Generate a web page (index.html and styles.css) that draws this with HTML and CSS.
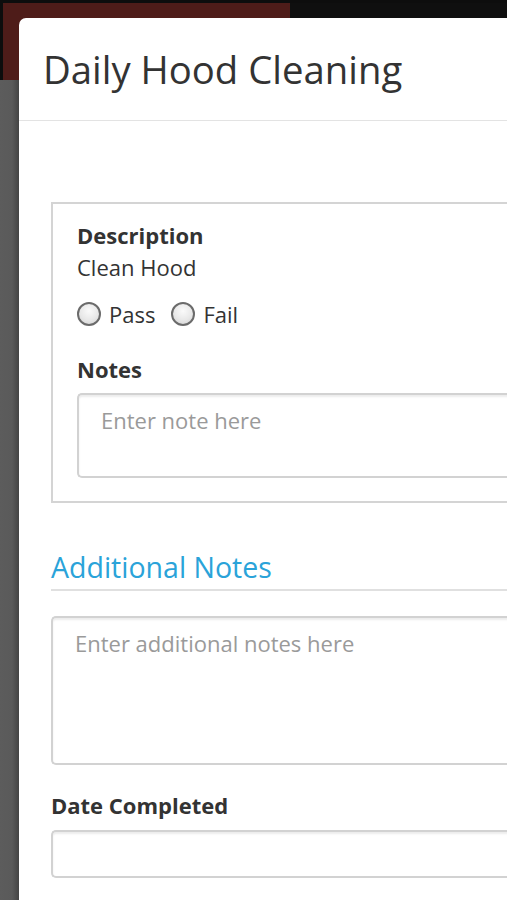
FILE: index.html
```html
<!DOCTYPE html>
<html>
<head>
<meta charset="utf-8">
<link rel="stylesheet" href="styles.css">
</head>
<body>
<div class="backdrop">
  <div class="bg-top">
    <div class="bg-red"></div>
    <div class="bg-black"></div>
  </div>
  <div class="bg-gray"></div>
</div>
<div class="modal">
  <div class="modal-header">
    <h1 class="title">Daily Hood Cleaning</h1>
  </div>
  <div class="modal-body">
    <div class="card">
      <div class="label">Description</div>
      <div class="value">Clean Hood</div>
      <div class="radios">
        <label class="radio"><span class="dot"></span>Pass</label>
        <label class="radio"><span class="dot"></span>Fail</label>
      </div>
      <div class="label notes-label">Notes</div>
      <div class="textarea small"><span class="ph">Enter note here</span></div>
    </div>
    <h2 class="section">Additional Notes</h2>
    <div class="textarea big"><span class="ph">Enter additional notes here</span></div>
    <div class="label date-label">Date Completed</div>
    <div class="input"></div>
  </div>
</div>
</body>
</html>
```
FILE: styles.css
```css
html, body {
  margin: 0;
  padding: 0;
  width: 507px;
  height: 900px;
  overflow: hidden;
  background: #0d0d0d;
  font-family: "Open Sans", "Noto Sans", sans-serif;
  color: #333;
}
.backdrop {
  position: absolute;
  left: 0; top: 0;
  width: 507px; height: 900px;
  display: flex;
  flex-direction: column;
}
.bg-top {
  display: flex;
  height: 80px;
  padding: 3px 0 0 3px;
  box-sizing: border-box;
}
.bg-red {
  width: 287px;
  background: #4e1c19;
}
.bg-black {
  flex: 1;
  background: #0f0f0f;
}
.bg-gray {
  flex: 1;
  background: linear-gradient(to right, #5c5c5c 0, #5a5a5a 12px, #444 19px);
}
.modal {
  position: absolute;
  left: 19px;
  top: 18px;
  width: 560px;
  height: 900px;
  background: #fff;
  border-radius: 7px 0 0 0;
}
.modal-header {
  height: 103px;
  border-bottom: 1px solid #e3e3e3;
  padding: 0 0 0 24px;
  box-sizing: border-box;
}
.title {
  margin: 0;
  padding-top: 25px;
  font-size: 38.3px;
  font-weight: 400;
  line-height: 52px;
  color: #333;
}
.modal-body {
  padding: 81px 0 0 32px;
}
.card {
  border: 2px solid #d4d4d4;
  border-right: none;
  padding: 16px 0 23px 24px;
}
.label {
  font-weight: 700;
  font-size: 22px;
  line-height: 30px;
  color: #333;
}
.value {
  font-size: 22px;
  line-height: 30px;
  margin-top: 2px;
}
.radios {
  display: flex;
  gap: 16px;
  margin-top: 19px;
}
.radio {
  display: flex;
  align-items: center;
  gap: 8px;
  font-size: 22px;
  line-height: 26px;
}
.dot {
  width: 20px;
  height: 20px;
  border: 2px solid #6b6b6b;
  border-radius: 50%;
  background: radial-gradient(circle at 50% 35%, #fafafa 0, #e8e8e8 55%, #cfcfcf 100%);
  display: inline-block;
}
.notes-label {
  margin-top: 27px;
}
.textarea {
  border: 2px solid #d2d2d2;
  border-right: none;
  border-radius: 5px 0 0 5px;
  box-shadow: inset 0 2px 2px rgba(0,0,0,0.08);
  box-sizing: border-box;
  padding: 10px 0 0 22px;
}
.textarea.small {
  height: 85px;
  margin-top: 9px;
}
.textarea.big {
  height: 149px;
  margin-top: 25px;
}
.ph {
  font-size: 22px;
  line-height: 30px;
  color: #9a9a9a;
}
.section {
  margin: 45px 0 0 0;
  font-size: 28.5px;
  font-weight: 400;
  line-height: 38px;
  color: #2aa3d9;
  padding-bottom: 3px;
  border-bottom: 2px solid #e0e0e0;
}
.date-label {
  margin-top: 25px;
}
.input {
  height: 48px;
  margin-top: 10px;
  border: 2px solid #d2d2d2;
  border-right: none;
  border-radius: 5px 0 0 5px;
  box-shadow: inset 0 2px 2px rgba(0,0,0,0.08);
  box-sizing: border-box;
}
```
